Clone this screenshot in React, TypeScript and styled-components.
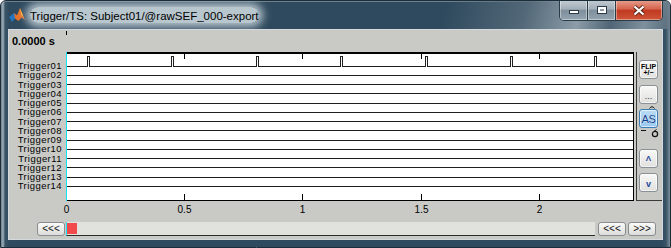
import React from "react";
import styled, { createGlobalStyle } from "styled-components";

const GlobalStyle = createGlobalStyle`
  html, body {
    margin: 0;
    padding: 0;
    background: #ffffff;
  }
  body {
    font-family: "Liberation Sans", Arial, sans-serif;
  }
`;

const Window = styled.div`
  box-sizing: border-box;
  width: 671px;
  height: 248px;
  display: flex;
  flex-direction: column;
  border: 1px solid #1c2d3a;
  border-radius: 6px 6px 0 0;
  overflow: hidden;
  background: linear-gradient(
    to right,
    #6d7f8c 0px,
    #9eafba 2px,
    #3a5467 4px,
    #2f4a5e 8px,
    #2f4a5e calc(100% - 8px),
    #3a5467 calc(100% - 4px),
    #7d8f9b 100%
  );
  box-shadow: inset 0 1px 0 rgba(255, 255, 255, 0.3);
`;

const TitleBar = styled.div`
  height: 28px;
  flex: none;
  display: flex;
  align-items: center;
  padding-left: 8px;
  background: linear-gradient(
    105deg,
    rgba(47, 74, 94, 0) 0%,
    rgba(47, 74, 94, 0) 66%,
    rgba(92, 112, 127, 0.8) 78%,
    rgba(150, 165, 176, 0.9) 86%,
    rgba(88, 108, 124, 0.8) 91%,
    rgba(140, 156, 168, 0.85) 96%,
    rgba(100, 118, 132, 0.7) 100%
  );
`;

const TitleText = styled.span`
  margin-left: 5px;
  padding-top: 2px;
  font-size: 11.5px;
  line-height: 14px;
  color: #000;
  white-space: nowrap;
  background: rgba(196, 208, 216, 0.92);
  box-shadow: 0 0 8px 4px rgba(196, 208, 216, 0.92);
  border-radius: 8px;
`;

const Controls = styled.div`
  align-self: flex-start;
  margin: -1px 7px 0 auto;
  display: flex;
  height: 20px;
  border: 1px solid #2a3b48;
  border-top: none;
  border-radius: 0 0 5px 5px;
  overflow: hidden;
`;

const CtlButton = styled.div<{ $kind: "min" | "max" | "close" }>`
  width: ${(p) => (p.$kind === "close" ? 46 : 27)}px;
  display: flex;
  align-items: center;
  justify-content: center;
  box-shadow: inset 0 0 0 1px rgba(255, 255, 255, 0.4);
  border-left: ${(p) => (p.$kind === "min" ? "none" : "1px solid #2a3b48")};
  background: ${(p) =>
    p.$kind === "close"
      ? "linear-gradient(#e8a08f 0%, #d4634c 45%, #c03a21 52%, #cf5538 100%)"
      : "linear-gradient(#c3ccd3 0%, #a2afb9 45%, #7f909c 52%, #93a4b0 100%)"};
`;

const ClientArea = styled.div`
  flex: 1;
  margin: 0 7px 7px 7px;
  border: 1px solid #d3d9dd;
  background: #c9cac6;
  display: grid;
  grid-template-columns: 57px 568px 2px 26px;
  grid-template-rows: 22px 149px 21px 14px 1fr;
  min-height: 0;
`;

const TimeReadout = styled.div`
  grid-column: 1;
  grid-row: 1;
  padding: 5px 0 0 3px;
  font-weight: bold;
  font-size: 11px;
  line-height: 13px;
  white-space: nowrap;
`;

const TimeTick = styled.div`
  grid-column: 2;
  grid-row: 1;
  width: 1px;
  height: 4px;
  margin-top: 1px;
  background: #000;
`;

const ChannelLabels = styled.div`
  grid-column: 1;
  grid-row: 2;
  display: flex;
  flex-direction: column;
  padding: 9px 4px 0 0;
`;

const ChannelLabel = styled.div`
  height: 9.25px;
  line-height: 9.25px;
  text-align: right;
  font-size: 9.5px;
  letter-spacing: 0.45px;
  white-space: nowrap;
  color: #000;
`;

const PlotSvg = styled.svg`
  grid-column: 2;
  grid-row: 2 / 4;
  overflow: visible;
  display: block;
`;

const SidePanel = styled.div`
  grid-column: 4;
  grid-row: 2;
  border-left: 1px solid #3a3a3a;
  border-bottom: 1px solid #3a3a3a;
  display: flex;
  flex-direction: column;
  align-items: flex-start;
  padding: 8px 0 0 2px;
`;

const SideButton = styled.div<{ $active?: boolean; $mt?: number; $align?: string }>`
  box-sizing: border-box;
  width: 19px;
  height: 19px;
  margin-top: ${(p) => p.$mt ?? 0}px;
  border: 1px solid ${(p) => (p.$active ? "#3c7db5" : "#8b9096")};
  border-radius: 3px;
  background: ${(p) =>
    p.$active
      ? "linear-gradient(#b9dcf6, #9ac8ef)"
      : "linear-gradient(#f8f8f7, #e0e0de)"};
  box-shadow: inset 0 0 0 1px rgba(255, 255, 255, 0.6);
  display: flex;
  flex-direction: column;
  align-items: center;
  justify-content: ${(p) => p.$align ?? "center"};
  color: ${(p) => (p.$active ? "#123f88" : "#000")};
  overflow: hidden;
`;

const FlipText = styled.span`
  font-size: 7px;
  font-weight: bold;
  line-height: 6px;
  text-align: center;
`;

const DotsText = styled.span`
  font-size: 9px;
  line-height: 9px;
  padding-bottom: 2px;
  color: #333;
`;

const AsText = styled.span`
  font-size: 11px;
  letter-spacing: -0.3px;
  line-height: 12px;
  text-shadow: 0 0 1px #ffffff;
`;

const ArrowText = styled.span<{ $down?: boolean }>`
  font-size: ${(p) => (p.$down ? 9 : 8)}px;
  font-weight: bold;
  line-height: 9px;
  color: #1f4aa0;
  padding-top: ${(p) => (p.$down ? 3 : 0)}px;
`;

const Mark = styled.svg`
  display: block;
  flex: none;
`;

const NavLeft = styled.div`
  grid-column: 1;
  grid-row: 4;
  display: flex;
  justify-content: flex-end;
  padding-right: 1px;
`;

const ScrollRow = styled.div`
  grid-column: 2 / 5;
  grid-row: 4;
  display: flex;
  padding-right: 6px;
`;

const Slider = styled.div`
  flex: 1;
  display: flex;
  align-items: flex-start;
  background: #e1e2de;
  border-left: 1px solid #18e4f4;
  border-bottom: 1px solid #2c2c2c;
`;

const Thumb = styled.div`
  width: 10px;
  height: 11px;
  margin-top: 1px;
  background: #f24a4a;
`;

const NavButton = styled.div<{ $ml?: number }>`
  box-sizing: border-box;
  width: 28px;
  height: 14px;
  margin-left: ${(p) => p.$ml ?? 0}px;
  border: 1px solid #8a8d90;
  border-radius: 3px;
  background: linear-gradient(#fafaf9, #dcdcda);
  display: flex;
  align-items: center;
  justify-content: center;
  font-size: 10px;
  line-height: 10px;
  color: #141414;
`;

const channels = Array.from({ length: 14 }, (_, i) => `Trigger${String(i + 1).padStart(2, "0")}`);
const rowY = (i: number) => Math.round(13.7 + 9.25 * i);
const pulses = [21, 105, 190, 274, 359, 444, 528];
const PX_PER_SEC = 236.4;
const ticks = [0, 0.5, 1, 1.5, 2];

const MatlabIcon = () => (
  <svg width="16" height="16" viewBox="0 0 16 16">
    <polygon points="0,10 5,6 8,8.5 6,11.5 3,15" fill="#2374bd" />
    <polygon points="5,6 8,8.5 11,1 13,6 16,13 12.5,10.5 9.5,14 6,11.5" fill="#e7702a" />
    <polygon points="11,1 13,6 14.5,10 12,7.5" fill="#f7b541" />
  </svg>
);

const MinIcon = () => (
  <svg width="12" height="10" viewBox="0 0 12 10">
    <rect x="1.5" y="5.5" width="9" height="3" fill="#fff" stroke="#2b3845" />
  </svg>
);

const MaxIcon = () => (
  <svg width="12" height="10" viewBox="0 0 12 10">
    <rect x="1.5" y="1.5" width="9" height="7" fill="none" stroke="#2b3845" />
    <rect x="3" y="3" width="6" height="4" fill="none" stroke="#fff" strokeWidth="2" />
  </svg>
);

const CloseIcon = () => (
  <svg width="14" height="11" viewBox="0 0 14 11">
    <path d="M2.5 1.5 L11.5 9.5 M11.5 1.5 L2.5 9.5" stroke="#5a2418" strokeWidth="4" />
    <path d="M2.5 1.5 L11.5 9.5 M11.5 1.5 L2.5 9.5" stroke="#ffffff" strokeWidth="2.2" />
  </svg>
);

function Plot() {
  const W = 568;
  const H = 149;
  let trace = "M1 14.5";
  pulses.forEach((p) => {
    trace += ` H${p + 0.5} V4.5 H${p + 2.5} V14.5`;
  });
  trace += ` H${W - 1}`;
  return (
    <PlotSvg width={W} height={170} viewBox={`0 0 ${W} 170`}>
      <rect x="0" y="0" width={W} height={H} fill="#ffffff" />
      <g shapeRendering="crispEdges">
        {channels.map((c, i) =>
          i === 0 ? null : (
            <line key={c} x1="1" x2={W - 1} y1={rowY(i) + 0.5} y2={rowY(i) + 0.5} stroke="#1e1e1e" />
          )
        )}
        <path d={trace} fill="none" stroke="#1e1e1e" />
        <rect x="0" y="0" width={W} height="2" fill="#000" />
        <line x1={W - 0.5} x2={W - 0.5} y1="0" y2={H} stroke="#000" />
        <line x1="0" x2={W} y1={H - 0.5} y2={H - 0.5} stroke="#000" />
        {ticks.slice(1).map((t) => {
          const x = Math.round(t * PX_PER_SEC) + 0.5;
          return (
            <g key={t}>
              <line x1={x} x2={x} y1="2" y2="7" stroke="#000" />
              <line x1={x} x2={x} y1={H - 7} y2={H - 1} stroke="#000" />
            </g>
          );
        })}
        <line x1="0.5" x2="0.5" y1="0" y2={H} stroke="#12e2f2" />
      </g>
      {ticks.map((t) => (
        <text
          key={t}
          x={Math.round(t * PX_PER_SEC) + 0.5}
          y="161"
          textAnchor="middle"
          fontFamily='"Liberation Sans", Arial, sans-serif'
          fontSize="10"
          fill="#000"
        >
          {t}
        </text>
      ))}
    </PlotSvg>
  );
}

export default function App() {
  return (
    <>
      <GlobalStyle />
      <Window>
        <TitleBar>
          <MatlabIcon />
          <TitleText>Trigger/TS: Subject01/@rawSEF_000-export</TitleText>
          <Controls>
            <CtlButton $kind="min">
              <MinIcon />
            </CtlButton>
            <CtlButton $kind="max">
              <MaxIcon />
            </CtlButton>
            <CtlButton $kind="close">
              <CloseIcon />
            </CtlButton>
          </Controls>
        </TitleBar>
        <ClientArea>
          <TimeReadout>0.0000 s</TimeReadout>
          <TimeTick />
          <ChannelLabels>
            {channels.map((c) => (
              <ChannelLabel key={c}>{c}</ChannelLabel>
            ))}
          </ChannelLabels>
          <Plot />
          <SidePanel>
            <SideButton>
              <FlipText>
                FLIP
                <br />
                +/−
              </FlipText>
            </SideButton>
            <SideButton $mt={6} $align="flex-end">
              <DotsText>...</DotsText>
            </SideButton>
            <Mark width="22" height="5" viewBox="0 0 22 5">
              <path d="M10.5 4.5 Q13 1 15.5 4.5" fill="none" stroke="#111" />
            </Mark>
            <SideButton $active>
              <AsText>AS</AsText>
            </SideButton>
            <Mark width="22" height="10" viewBox="0 0 22 10">
              <line x1="2" x2="7" y1="2.5" y2="2.5" stroke="#111" />
              <circle cx="16" cy="6" r="2.6" fill="none" stroke="#111" strokeWidth="1.2" />
              <line x1="15" x2="17.5" y1="3.5" y2="1.5" stroke="#111" />
            </Mark>
            <SideButton $mt={11}>
              <ArrowText>Λ</ArrowText>
            </SideButton>
            <SideButton $mt={5}>
              <ArrowText $down>v</ArrowText>
            </SideButton>
          </SidePanel>
          <NavLeft>
            <NavButton>&lt;&lt;&lt;</NavButton>
          </NavLeft>
          <ScrollRow>
            <Slider>
              <Thumb />
            </Slider>
            <NavButton $ml={3}>&lt;&lt;&lt;</NavButton>
            <NavButton $ml={2}>&gt;&gt;&gt;</NavButton>
          </ScrollRow>
        </ClientArea>
      </Window>
    </>
  );
}
